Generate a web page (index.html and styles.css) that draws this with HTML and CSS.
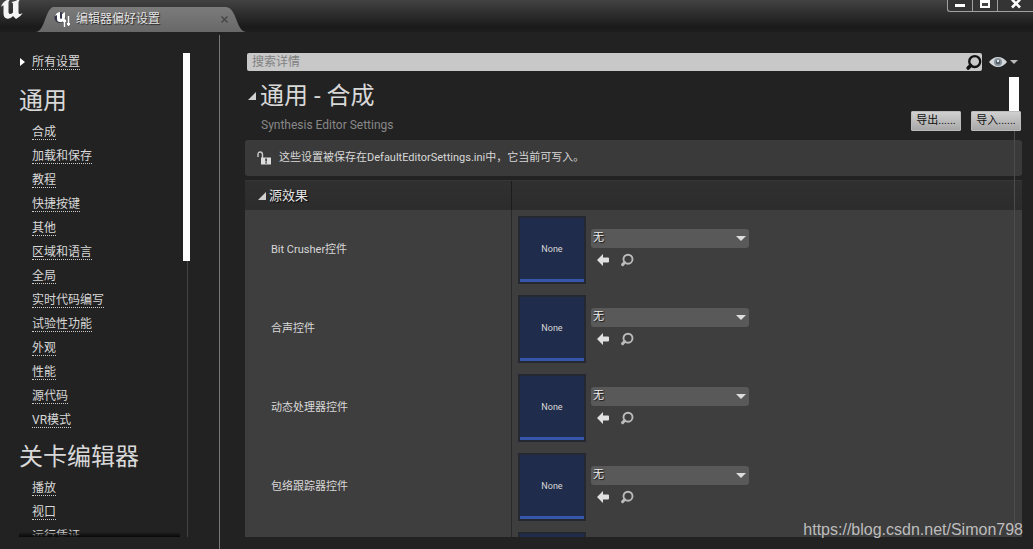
FILE: index.html
```html
<!DOCTYPE html>
<html lang="zh-CN">
<head>
<meta charset="utf-8">
<title>编辑器偏好设置</title>
<link rel="stylesheet" href="styles.css">
</head>
<body>
<svg class="defs" width="0" height="0" aria-hidden="true">
  <symbol id="back" viewBox="0 0 12 12"><path d="M0 6 6 0v3.500h5Q12 3.500 12 4.500v3Q12 8.500 11 8.500H6V12Z" fill="#e0e0e0"/></symbol>
  <symbol id="find" viewBox="0 0 14 14"><circle cx="8" cy="6.200" r="4.500" fill="none" stroke="currentColor" stroke-width="1.900"/><path d="M4.700 9.500 2.600 11.600" stroke="currentColor" stroke-width="3" stroke-linecap="round"/></symbol>
  <symbol id="corner" viewBox="0 0 8 8"><path d="M8 0v8H0Z" fill="#d0d0d0"/></symbol>
  <symbol id="down" viewBox="0 0 8 4"><path d="M0 0h8L4 4Z" fill="currentColor"/></symbol>
</svg>
<header class="titlebar">
  <svg class="logo" width="24" height="20" viewBox="0 0 24 20" role="img" aria-label="Unreal"><path d="M1 7C2 3 5 0 10-1L8.500 2v9.500c0 1.500.500 2.500 1.500 2.500s2-.500 3-1.500V3.500L11.500 2C15 1.500 18 0 20.500-2L18.500 2v10c0 1.500.500 2 1.500 2s1.500-.500 2.500-1C21 16 18.500 17.500 16 19l-3-3c-2.500 2.500-5 3.500-7.500 2C4 17 3.500 15.500 3.500 13V5.500C2.500 5.500 2 6 1 7Z" fill="#f4f4f4"/></svg>
  <div class="tab">
    <svg class="tab-icon" width="17" height="17" viewBox="0 0 17 17"><circle cx="6" cy="6.500" r="5.500" fill="#35384a"/><path d="M1 5C2 2 4 1 6 1v6q1 2 2 0V3l3-2v6q-2 5-5 4-3 0-3-3V4Z" fill="#fff"/><path d="M10.500 8v8M14.500 5v10" stroke="#fff" stroke-width="1.400"/><path d="M9 10h3M13 13h3" stroke="#fff" stroke-width="2"/></svg>
    <span class="tab-title">编辑器偏好设置</span>
    <button class="tab-close" aria-label="关闭标签"><svg width="7" height="7" viewBox="0 0 7 7"><path d="m.5.500 6 6m0-6-6 6" stroke="#444" stroke-width="1.300"/></svg></button>
  </div>
  <div class="window-buttons">
    <button aria-label="最小化"><svg width="12" height="14" viewBox="0 0 12 14"><path d="M1 4h10v3H1Z" fill="#fff"/></svg></button>
    <button aria-label="最大化"><svg width="12" height="14" viewBox="0 0 12 14"><path d="M1 0h10v8H1Z" fill="#fff"/><path d="M3 3h6v3H3Z" fill="#444"/></svg></button>
    <button class="wide" aria-label="关闭"><svg width="12" height="14" viewBox="0 0 12 14"><path d="m2-.500 8 8m0-8-8 8" stroke="#fff" stroke-width="2.600"/></svg></button>
  </div>
</header>
<div class="body">
  <aside class="sidebar">
    <nav class="nav">
      <div class="item all"><svg width="6" height="8" viewBox="0 0 6 8"><path d="M1 0 6 4 1 8Z" fill="#fff"/></svg><a href="#">所有设置</a></div>
      <h2>通用</h2>
      <div class="item"><a href="#">合成</a></div>
      <div class="item"><a href="#">加载和保存</a></div>
      <div class="item"><a href="#">教程</a></div>
      <div class="item"><a href="#">快捷按键</a></div>
      <div class="item"><a href="#">其他</a></div>
      <div class="item"><a href="#">区域和语言</a></div>
      <div class="item"><a href="#">全局</a></div>
      <div class="item"><a href="#">实时代码编写</a></div>
      <div class="item"><a href="#">试验性功能</a></div>
      <div class="item"><a href="#">外观</a></div>
      <div class="item"><a href="#">性能</a></div>
      <div class="item"><a href="#">源代码</a></div>
      <div class="item"><a href="#">VR模式</a></div>
      <h2>关卡编辑器</h2>
      <div class="item"><a href="#">播放</a></div>
      <div class="item"><a href="#">视口</a></div>
      <div class="item"><a href="#">运行凭证</a></div>
    </nav>
    <div class="scroll"><div class="thumb"></div></div>
  </aside>
  <main class="content">
    <div class="search-row">
      <label class="search"><input type="text" placeholder="搜索详情" aria-label="搜索详情"><svg width="17" height="17" viewBox="0 0 14 14"><use href="#find"/></svg></label>
      <button class="view" aria-label="视图选项"><svg width="18" height="12" viewBox="0 0 18 12"><path d="M0 6Q4 1 9 1t9 5q-4 5-9 5T0 6Z" fill="#d5d8db"/><circle cx="9" cy="6" r="4" fill="#87929b"/><circle cx="9" cy="6" r="2.200" fill="#4f5a64"/><circle cx="9" cy="5" r="1.200" fill="#e5e8eb"/></svg><svg width="8" height="4"><use href="#down"/></svg></button>
    </div>
    <div class="details">
      <div class="heading">
        <div class="titles">
          <h1><svg width="8" height="8"><use href="#corner"/></svg>通用 - 合成</h1>
          <p>Synthesis Editor Settings</p>
        </div>
        <div class="actions"><button>导出......</button><button>导入......</button></div>
      </div>
      <div class="notice"><svg width="14" height="14" viewBox="0 0 14 14"><path d="M1 6V3.500Q1 1 3.200 1T5.500 3.500V7" fill="none" stroke="#ccc" stroke-width="1.400"/><path d="M4 6.500h10v7H4Z" fill="#ddd"/><path d="M8.300 7.500h1.600v3H8.300Zm0 3.800h1.600v1.200H8.300Z" fill="#333"/></svg><span>这些设置被保存在DefaultEditorSettings.ini中，它当前可写入。</span></div>
      <section class="group">
        <div class="group-head"><h3><svg width="8" height="8"><use href="#corner"/></svg>源效果</h3></div>
        <div class="row">
          <div class="name">Bit Crusher控件</div>
          <div class="value"><div class="thumbnail">None</div><div class="picker"><span class="combo"><select aria-label="Bit Crusher控件"><option>无</option></select><svg width="10" height="5"><use href="#down"/></svg></span><div class="tools"><button aria-label="使用选中资产"><svg width="12" height="12"><use href="#back"/></svg></button><button aria-label="浏览"><svg width="14" height="14"><use href="#find"/></svg></button></div></div></div>
        </div>
        <div class="row">
          <div class="name">合声控件</div>
          <div class="value"><div class="thumbnail">None</div><div class="picker"><span class="combo"><select aria-label="合声控件"><option>无</option></select><svg width="10" height="5"><use href="#down"/></svg></span><div class="tools"><button aria-label="使用选中资产"><svg width="12" height="12"><use href="#back"/></svg></button><button aria-label="浏览"><svg width="14" height="14"><use href="#find"/></svg></button></div></div></div>
        </div>
        <div class="row">
          <div class="name">动态处理器控件</div>
          <div class="value"><div class="thumbnail">None</div><div class="picker"><span class="combo"><select aria-label="动态处理器控件"><option>无</option></select><svg width="10" height="5"><use href="#down"/></svg></span><div class="tools"><button aria-label="使用选中资产"><svg width="12" height="12"><use href="#back"/></svg></button><button aria-label="浏览"><svg width="14" height="14"><use href="#find"/></svg></button></div></div></div>
        </div>
        <div class="row">
          <div class="name">包络跟踪器控件</div>
          <div class="value"><div class="thumbnail">None</div><div class="picker"><span class="combo"><select aria-label="包络跟踪器控件"><option>无</option></select><svg width="10" height="5"><use href="#down"/></svg></span><div class="tools"><button aria-label="使用选中资产"><svg width="12" height="12"><use href="#back"/></svg></button><button aria-label="浏览"><svg width="14" height="14"><use href="#find"/></svg></button></div></div></div>
        </div>
        <div class="row">
          <div class="name"></div>
          <div class="value"><div class="thumbnail"></div></div>
        </div>
      </section>
      <div class="details-scroll"><div class="thumb"></div></div>
    </div>
  </main>
</div>
<div class="watermark">https://blog.csdn.net/Simon798</div>
</body>
</html>
```
FILE: styles.css
```css
* { box-sizing: border-box; }
body {
  margin: 0;
  height: 100vh;
  display: flex;
  flex-direction: column;
  overflow: hidden;
  background: #222;
  color: #d8d8d8;
  font: 12px/16px Roboto, "Noto Sans CJK SC", sans-serif;
}
h1, h2, h3, p { margin: 0; font-weight: 400; }
button, input, select { font: inherit; color: inherit; border: 0; margin: 0; padding: 0; background: none; }
svg { flex: none; display: block; }
.defs { position: absolute; }

.titlebar {
  flex: none;
  height: 32px;
  display: flex;
  align-items: flex-start;
  background: linear-gradient(#424242, #1a1a1a 85%, #1e1e1e);
}
.logo { margin-right: 12px; }
.tab {
  width: 210px;
  height: 25px;
  margin-top: 7px;
  padding: 0 18px;
  display: flex;
  align-items: center;
  background: linear-gradient(#7b7b7b, #686868);
  clip-path: path("M0 25C9 24 9 3 17 0H190C201 1 200 24 210 25Z");
}
.tab-title { flex: 1; margin-left: 5px; line-height: 24px; color: #e4e4e4; text-shadow: 1px 1px 1px #222; padding-bottom: 1px; }
.tab-close { line-height: 0; }
.window-buttons { margin-left: auto; display: flex; }
.window-buttons button {
  width: 25px;
  height: 12px;
  display: flex;
  align-items: flex-start;
  justify-content: center;
  background: #343434;
  border: 1px solid #a0a0a0;
  border-top: 0;
  border-right: 0;
}
.window-buttons button:first-child { border-bottom-left-radius: 3px; }
.window-buttons .wide { width: 36px; }

.body { flex: 1; min-height: 0; display: flex; margin-top: 3px; }
.sidebar { flex: none; width: 220px; display: flex; padding: 15px 28px 12px 19px; border-right: 1px solid #777; }
.nav { flex: 1; overflow: hidden; position: relative; }
.nav::after { content: ""; position: absolute; left: 0; right: 3px; bottom: 0; height: 5px; background: linear-gradient(transparent, #080808); }
.item { height: 24px; padding-left: 13px; display: flex; align-items: center; }
.item a { padding-top: 2px; line-height: 13px; color: #d8d8d8; text-decoration: none; border-bottom: 1px dotted #ccc; }
.all { padding-left: 0; gap: 7px; margin-bottom: 2px; }
h2 { font-size: 24px; line-height: 36px; padding: 7px 0 1px; white-space: nowrap; }
.scroll { width: 8px; margin-top: 3px; background: linear-gradient(#444, #444) 4px 0 / 1px 100% no-repeat; }
.scroll .thumb { width: 7px; height: 43%; background: #fff; }

.content { flex: 1; min-width: 0; display: flex; flex-direction: column; padding: 18px 11px 12px 25px; }
.search-row { flex: none; display: flex; align-items: center; gap: 7px; padding: 0 4px 0 2px; }
.search { flex: 1; height: 18px; display: flex; align-items: center; background: #c8c8c8; border-radius: 2px; color: #111; }
.search input { flex: 1; min-width: 0; height: 18px; padding-left: 5px; outline: 0; }
.search input::placeholder { color: #808080; opacity: 1; }
.view { display: flex; align-items: center; gap: 3px; color: #bbb; }
.details { flex: 1; min-height: 0; overflow: hidden; position: relative; margin-top: 4px; }
.heading { display: flex; justify-content: space-between; align-items: flex-end; height: 65px; }
.titles { align-self: flex-start; }
h1 { display: flex; align-items: center; gap: 4px; padding-left: 3px; font-size: 24px; line-height: 42px; }
.titles p { padding-left: 16px; color: #888; }
.actions { display: flex; gap: 10px; padding: 0 1px 9px 0; position: relative; z-index: 1; }
.actions button { width: 50px; height: 20px; background: linear-gradient(#d0d0d0, #a8a8a8); border: 1px solid #bbb; border-radius: 1px; color: #111; font-size: 11px; }
.notice { height: 36px; display: flex; align-items: center; gap: 8px; padding-left: 12px; background: #3a3a3a; border-radius: 3px; font-size: 11px; }
.group { margin-top: 4px; background: #3e3e3e; }
.group-head, .row { display: grid; grid-template-columns: 267px 1fr; }
.group-head { height: 30px; background: linear-gradient(#303030, #2c2c2c); border-top: 1px solid #363636; }
.group-head h3 { display: flex; align-items: center; gap: 3px; padding-left: 13px; font-size: 13px; color: #e4e4e4; text-shadow: 1px 1px 1px #000; border-right: 1px solid #1c1c1c; }
.row { height: 79px; font-size: 11px; }
.name { padding-left: 26px; display: flex; align-items: center; border-right: 1px solid #292929; }
.value { display: flex; align-items: center; padding-left: 6px; gap: 5px; }
.thumbnail {
  width: 68px;
  height: 68px;
  padding-bottom: 2px;
  display: flex;
  align-items: center;
  justify-content: center;
  background: #202c4b;
  border: 2px solid #242830;
  box-shadow: inset 0 -3px #3556ab;
  font-size: 9px;
}
.picker { width: 158px; padding-top: 1px; }
.combo { display: flex; align-items: center; height: 19px; padding-right: 3px; background: #595959; border-radius: 3px; color: #ddd; }
.combo select { flex: 1; height: 19px; padding-left: 2px; appearance: none; outline: 0; color: #eee; text-shadow: 1px 1px 1px #111; }
.combo svg { pointer-events: none; }
.tools { display: flex; align-items: center; gap: 11px; height: 24px; padding-left: 6px; color: #bbb; }
.details-scroll { position: absolute; top: 2px; right: 3px; bottom: 0; width: 10px; background: linear-gradient(#4c4c4c, #4c4c4c) 5px 0 / 1px 100% no-repeat; pointer-events: none; }
.details-scroll .thumb { height: 34px; background: #fff; }

.watermark { position: absolute; right: 10px; bottom: 9px; font: 16px/20px "Liberation Sans", sans-serif; color: #bdbdbd; }
```
